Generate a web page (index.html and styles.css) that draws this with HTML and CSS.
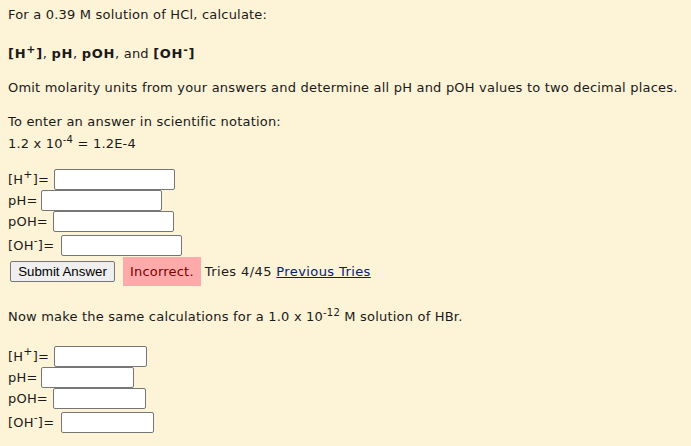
FILE: index.html
```html
<!DOCTYPE html>
<html>
<head>
<meta charset="utf-8">
<link rel="stylesheet" href="styles.css">
</head>
<body>
<div class="page">
  <p class="intro">For a 0.39 M solution of HCl, calculate:</p>
  <p class="targets"><b>[H<sup>+</sup>]</b>, <b>pH</b>, <b>pOH</b>, and <b>[OH<sup>-</sup>]</b></p>
  <p class="note">Omit molarity units from your answers and determine all pH and pOH values to two decimal places.</p>
  <p class="sci">To enter an answer in scientific notation:<br><span class="example">1.2 x 10<sup>-4</sup> = 1.2E-4</span></p>

  <div class="answers">
    <div class="row"><span class="lbl">[H<sup>+</sup>]=</span><input class="field" type="text"></div>
    <div class="row"><span class="lbl lbl-ph">pH=</span><input class="field" type="text"></div>
    <div class="row"><span class="lbl">pOH=</span><input class="field" type="text"></div>
    <div class="row row-oh"><span class="lbl lbl-oh">[OH<sup>-</sup>]=</span><input class="field" type="text"></div>
  </div>

  <div class="submit-row">
    <button class="submit">Submit Answer</button>
    <span class="badge">Incorrect.</span>
    <span class="tries">Tries 4/45 <a href="#" class="prev">Previous Tries</a></span>
  </div>

  <p class="part2">Now make the same calculations for a 1.0 x 10<sup>-12</sup> M solution of HBr.</p>

  <div class="answers answers-2">
    <div class="row"><span class="lbl">[H<sup>+</sup>]=</span><input class="field field-sm" type="text"></div>
    <div class="row"><span class="lbl lbl-ph">pH=</span><input class="field field-sm" type="text"></div>
    <div class="row"><span class="lbl">pOH=</span><input class="field field-sm" type="text"></div>
    <div class="row row-oh"><span class="lbl lbl-oh">[OH<sup>-</sup>]=</span><input class="field field-sm" type="text"></div>
  </div>
</div>
</body>
</html>
```

FILE: styles.css
```css
html, body {
  margin: 0;
  padding: 0;
  background: #fdf3d6;
}
body {
  font-family: "DejaVu Sans", Verdana, sans-serif;
  font-size: 13px;
  letter-spacing: 0.2px;
  color: #1a1a1a;
}
.page {
  padding: 7px 8px 0 8px;
}
p {
  margin: 0;
  line-height: 16px;
}
sup {
  font-size: 10px;
  line-height: 0;
  vertical-align: 5px;
}
.intro {
  margin-bottom: 23px;
}
.targets {
  margin-bottom: 18px;
}
.targets b {
  letter-spacing: 0.7px;
}
.targets sup {
  font-size: 11px;
}
.note {
  margin-bottom: 18px;
}
.sci {
  line-height: 22px;
  margin-top: -3px;
  margin-bottom: 14px;
}
.answers {
  display: flex;
  flex-direction: column;
}
.row {
  display: flex;
  align-items: center;
  height: 21px;
}
.row-oh {
  margin-top: 3px;
}
.lbl {
  margin-right: 5px;
}
.lbl-ph {
  margin-right: 3px;
}
.lbl-oh {
  margin-right: 7px;
}
.lbl sup {
  font-size: 11px;
  vertical-align: 6px;
}
.field {
  box-sizing: border-box;
  width: 121px;
  height: 21px;
  margin: 0;
  border: 1px solid #767676;
  border-radius: 2px;
  background: #fff;
  padding: 0 2px;
}
.field-sm {
  width: 93px;
}
.submit-row {
  display: flex;
  align-items: center;
  margin-top: 1px;
  height: 29px;
}
.submit {
  margin-left: 2px;
  box-sizing: border-box;
  height: 21px;
  width: 105px;
  padding: 0;
  font-family: "Liberation Sans", Arial, sans-serif;
  font-size: 13.3px;
  letter-spacing: 0;
  color: #000;
  background: #efefef;
  border: 1px solid #767676;
  border-radius: 2px;
}
.badge {
  margin-left: 8px;
  background: #ffaaaa;
  color: #7a0000;
  height: 29px;
  display: flex;
  align-items: center;
  padding: 0 7px;
}
.tries {
  margin-left: 4px;
  letter-spacing: 0.4px;
  color: #1a1a1a;
}
.prev {
  color: #00226a;
  text-decoration: underline;
}
.part2 {
  margin-top: 23px;
  margin-bottom: 21px;
}
```
